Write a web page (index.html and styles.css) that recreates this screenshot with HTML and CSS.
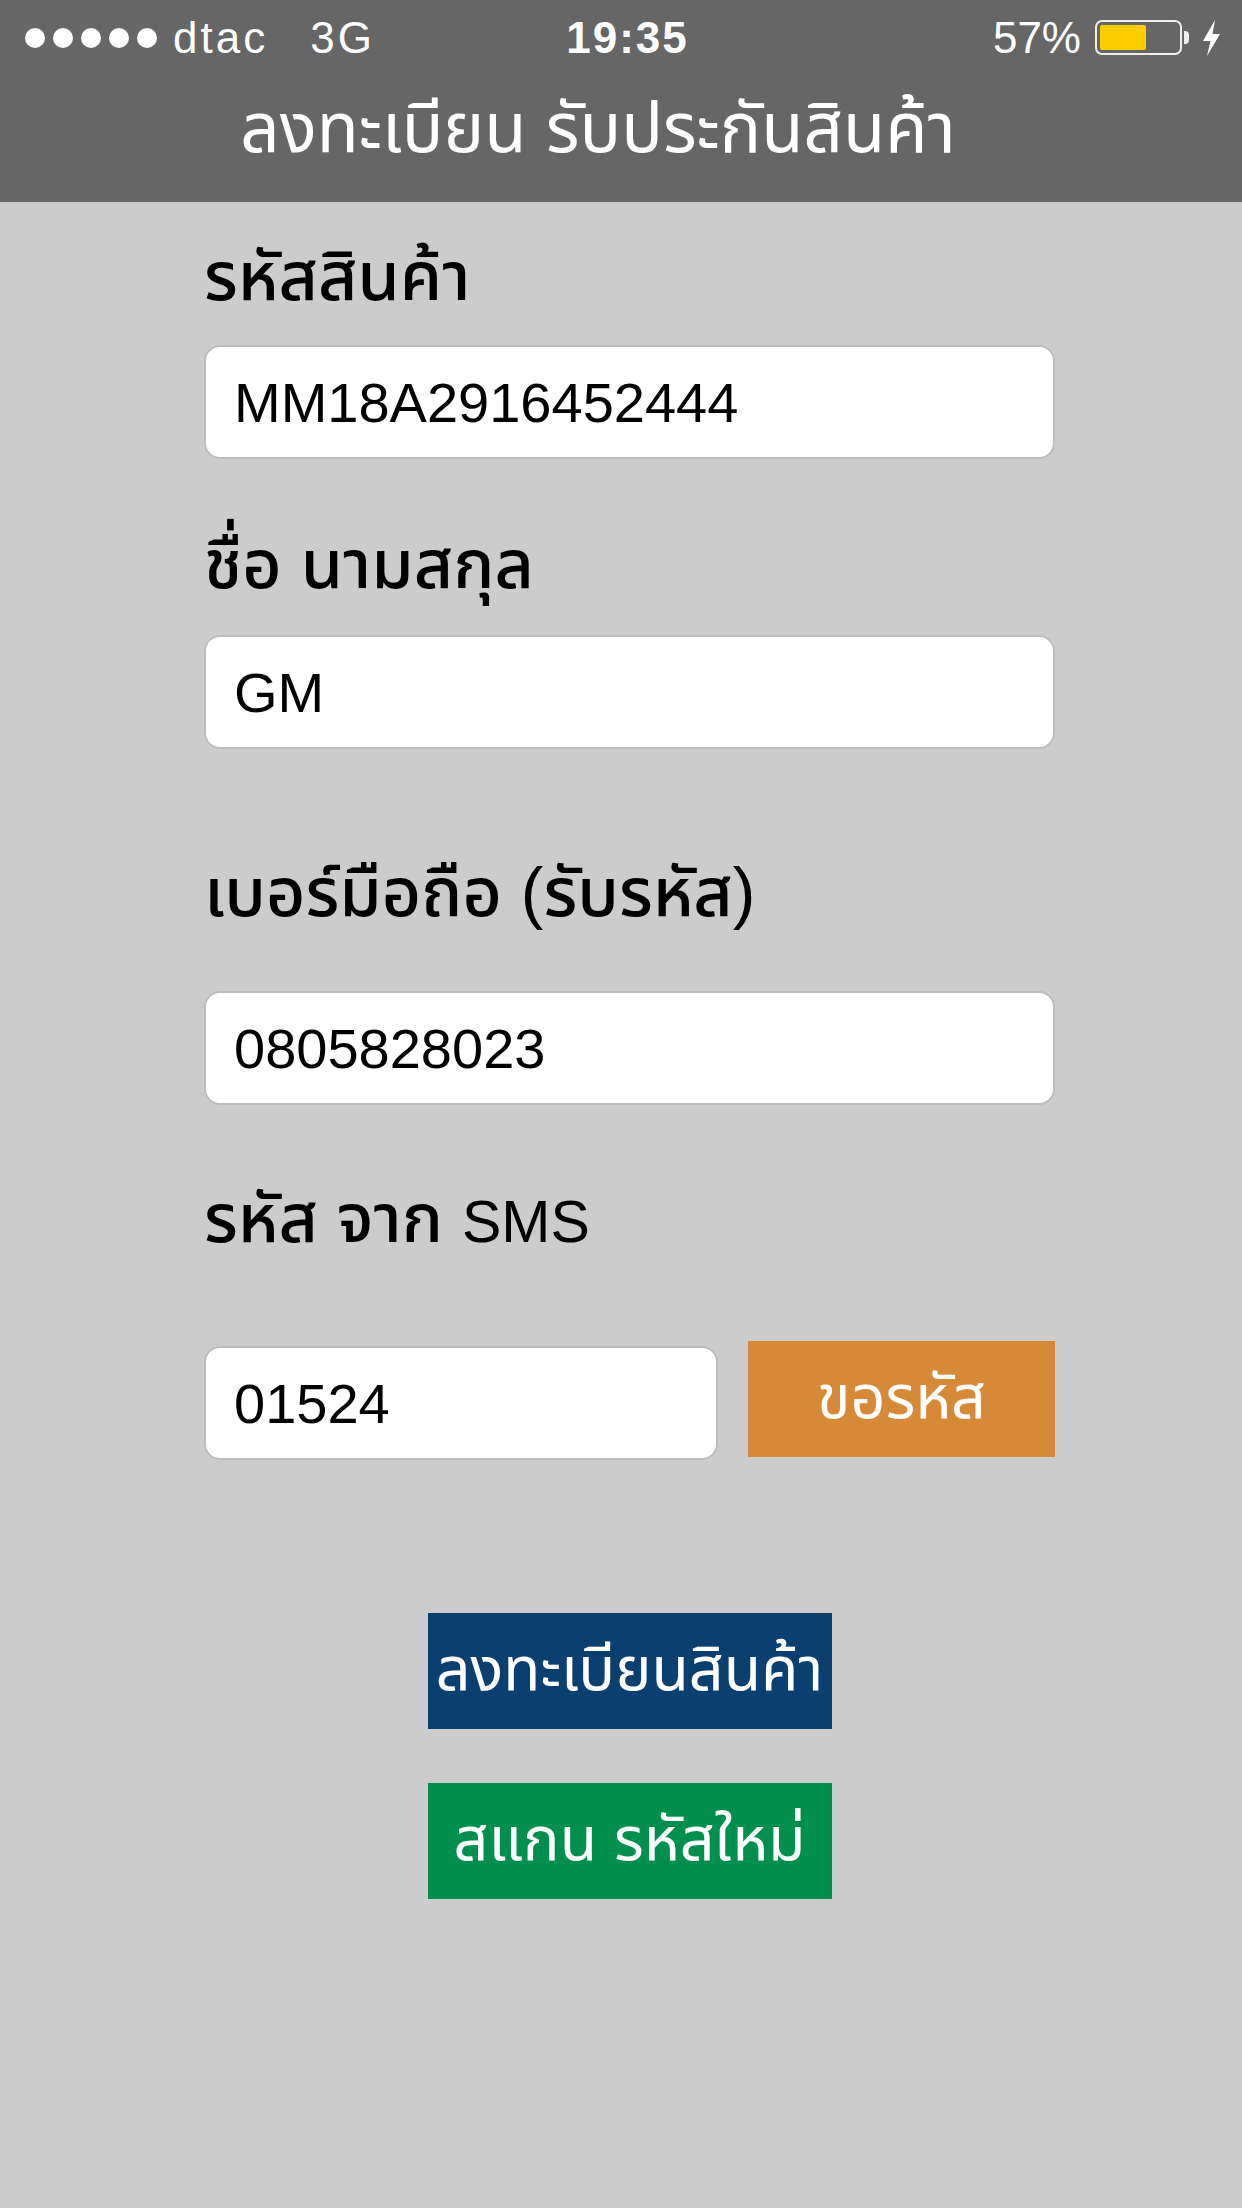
FILE: index.html
```html
<!DOCTYPE html>
<html lang="th">
<head>
<meta charset="utf-8">
<title>ลงทะเบียน รับประกันสินค้า</title>
<link rel="stylesheet" href="styles.css">
</head>
<body>
<div class="screen">
  <header class="topbar">
    <div class="status">
      <div class="status-left">
        <span class="dots"><i></i><i></i><i></i><i></i><i></i></span>
        <span class="carrier">dtac</span>
        <span class="net">3G</span>
      </div>
      <div class="status-time">19:35</div>
      <div class="status-right">
        <span class="pct">57%</span>
        <span class="battery"><span class="battery-fill"></span></span>
        <span class="battery-nub"></span>
        <svg class="bolt" viewBox="0 0 22 36" width="22" height="36"><path d="M15 0 L3 21 H10.5 L7 36 L20 14 H12.5 Z" fill="#fff"/></svg>
      </div>
    </div>
    <h1 class="title">ลงทะเบียน รับประกันสินค้า</h1>
  </header>

  <main class="form">
    <label class="field-label label-code">รหัสสินค้า</label>
    <input class="field-input input-code" type="text" value="MM18A2916452444" readonly>

    <label class="field-label label-name">ชื่อ นามสกุล</label>
    <input class="field-input input-name" type="text" value="GM" readonly>

    <label class="field-label label-phone">เบอร์มือถือ (รับรหัส)</label>
    <input class="field-input input-phone" type="text" value="0805828023" readonly>

    <label class="field-label label-sms">รหัส จาก <span class="latin">SMS</span></label>
    <div class="sms-row">
      <input class="field-input input-sms" type="text" value="01524" readonly>
      <button class="btn btn-orange" type="button">ขอรหัส</button>
    </div>

    <div class="actions">
      <button class="btn btn-blue" type="button">ลงทะเบียนสินค้า</button>
      <button class="btn btn-green" type="button">สแกน รหัสใหม่</button>
    </div>
  </main>
</div>
</body>
</html>
```

FILE: styles.css
```css
html, body {
  margin: 0;
  padding: 0;
  background: #cccccc;
}

body {
  font-family: "Liberation Sans", "Noto Sans Thai", "Noto Sans", sans-serif;
  color: #000;
}

.screen {
  width: 1242px;
  min-height: 2208px;
  background: #cccccc;
}

/* ---------- top bar ---------- */
.topbar {
  background: #666666;
  height: 202px;
  color: #fff;
  display: flex;
  flex-direction: column;
}

.status {
  height: 75px;
  display: grid;
  grid-template-columns: 1fr auto 1fr;
  align-items: center;
  font-size: 44px;
  padding: 0 20px 0 25px;
}

.status-left {
  display: flex;
  align-items: center;
}

.dots {
  display: flex;
  gap: 8px;
  margin-right: 16px;
}

.dots i {
  display: block;
  width: 20px;
  height: 20px;
  border-radius: 50%;
  background: #fff;
}

.carrier,
.net {
  letter-spacing: 3px;
}

.net {
  margin-left: 42px;
}

.status-time {
  font-weight: bold;
  letter-spacing: 2px;
  padding-left: 8px;
}

.status-right {
  display: flex;
  align-items: center;
  justify-content: flex-end;
}

.pct {
  margin-right: 14px;
}

.battery {
  width: 87px;
  height: 35px;
  box-sizing: border-box;
  border: 2px solid #eeeeee;
  border-radius: 7px;
  padding: 3px;
  display: flex;
}

.battery-fill {
  width: 46px;
  height: 100%;
  background: #ffcc00;
  border-radius: 2px;
}

.battery-nub {
  width: 5px;
  height: 13px;
  background: #eeeeee;
  border-radius: 0 4px 4px 0;
  margin-left: 2px;
}

.bolt {
  margin-left: 11px;
}

.title {
  flex: 1;
  margin: 0;
  display: flex;
  align-items: center;
  justify-content: center;
  font-size: 69px;
  font-weight: normal;
  padding: 0 46px 16px 0;
}

/* ---------- form ---------- */
.form {
  display: flex;
  flex-direction: column;
  padding: 34px 187px 0 204px;
}

.field-label {
  display: block;
  font-size: 68px;
  font-weight: 500;
  line-height: 80px;
  height: 80px;
  color: #000;
}

.field-label .latin {
  font-size: 59px;
  font-weight: normal;
}

.field-input {
  box-sizing: border-box;
  width: 100%;
  height: 114px;
  border: 2px solid #bdbdbd;
  border-radius: 16px;
  background: #fff;
  padding: 0 28px;
  font-family: "Liberation Sans", sans-serif;
  font-size: 56px;
  color: #000;
  outline: none;
  margin: 0;
}

.input-code { margin-top: 29px; }
.label-name { margin-top: 65px; }
.input-name { margin-top: 31px; }
.label-phone { margin-top: 103px; }
.input-phone { margin-top: 59px; }
.label-sms { margin-top: 73px; }

.sms-row {
  margin-top: 83px;
  display: flex;
  align-items: flex-start;
  justify-content: space-between;
}

.input-sms {
  width: 514px;
  margin-top: 5px;
}

.btn {
  border: none;
  color: #fff;
  font-family: "Liberation Sans", "Noto Sans Thai", "Noto Sans", sans-serif;
  font-size: 61px;
  padding: 0;
  height: 116px;
  display: flex;
  align-items: center;
  justify-content: center;
}

.btn-orange {
  width: 307px;
  background: #d68936;
}

.actions {
  margin-top: 153px;
  display: flex;
  flex-direction: column;
  align-items: center;
  gap: 54px;
}

.btn-blue {
  width: 404px;
  background: #0b3f6f;
}

.btn-green {
  width: 404px;
  background: #008f4d;
}
```
